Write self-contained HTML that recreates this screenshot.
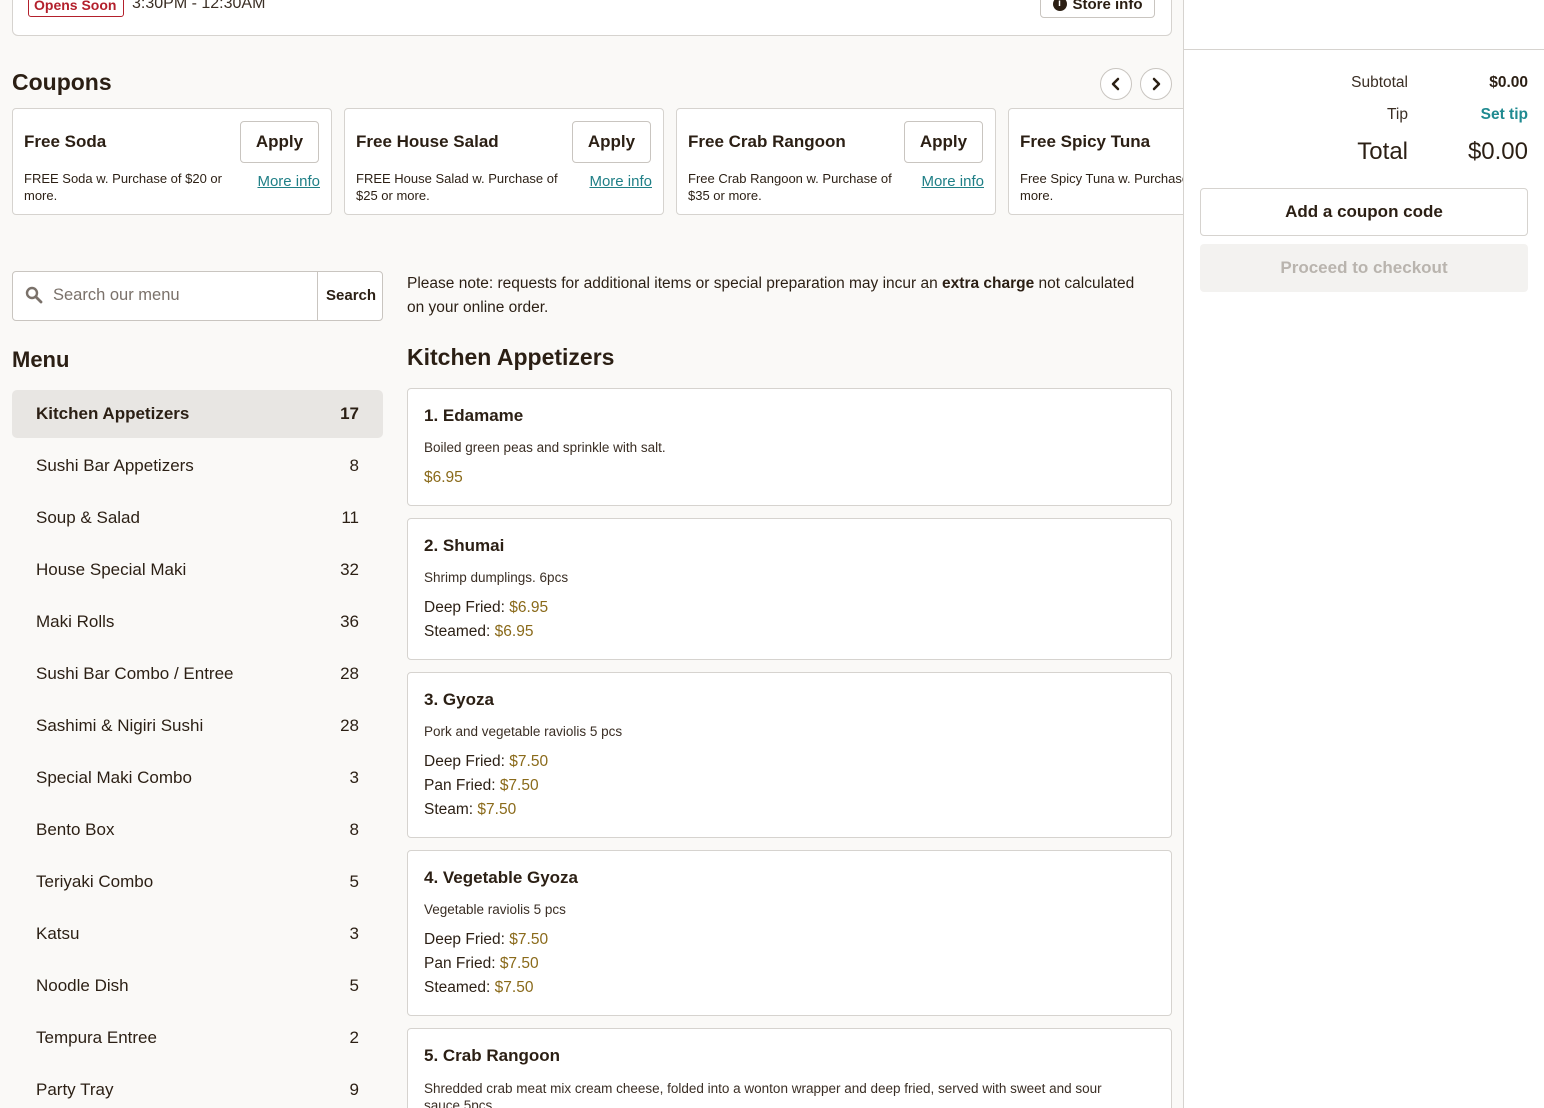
<!DOCTYPE html>
<html style="width:1544px;height:1108px;overflow:hidden"><head><meta charset="utf-8"><style>
*{box-sizing:border-box;margin:0;padding:0}
body{width:1544px;height:1108px;overflow:hidden;background:#faf9f7;font-family:"Liberation Sans",sans-serif;color:#2b1f14;position:relative}
.a{position:absolute}
.card{position:absolute;background:#fff;border:1px solid #d6d3cf;border-radius:4px}
.btn{position:absolute;background:#fff;border:1px solid #c9c5c0;border-radius:4px;display:flex;align-items:center;justify-content:center;font-weight:bold}
.cp .t{position:absolute;left:11px;top:23px;font-size:17px;font-weight:bold}
.cp .d{position:absolute;left:11px;top:61px;font-size:13px;line-height:17px;width:210px}
.cp .m{position:absolute;right:11px;top:64px;font-size:15px;color:#1f7f86;text-decoration:underline}
.cp .btn{right:12px;top:12px;width:79px;height:42px;font-size:17px}
.cat{position:absolute;left:12px;width:371px;height:48px;border-radius:5px;font-size:17px;display:flex;align-items:center;justify-content:space-between;padding:0 24px}
.it .t{position:absolute;left:16px;top:17px;font-size:17px;font-weight:bold}
.it .d{position:absolute;left:16px;top:51px;font-size:13.5px;color:#3a2e24}
.it .p{position:absolute;left:16px;font-size:15.5px}
.pr{color:#8a6a1a}
</style></head><body>
<div class="card" style="left:12px;top:-40px;width:1160px;height:76px;border-radius:6px"></div>
<div class="a" style="left:28px;top:-8px;width:96px;height:25px;border:1px solid #b3202c;border-radius:3px;color:#b3202c;font-size:14px;font-weight:bold;padding:4px 0 0 5px">Opens Soon</div>
<div class="a" style="left:132px;top:-5px;font-size:16px;color:#3a2e24">3:30PM - 12:30AM</div>
<div class="btn" style="left:1040px;top:-12px;width:115px;height:30px;font-size:15px;padding-top:2px"><span style="display:inline-block;width:14px;height:14px;border-radius:50%;background:#2b1f14;color:#fff;font-size:10px;text-align:center;line-height:14px;margin-right:6px">i</span>Store info</div>

<div class="a" style="left:12px;top:69px;font-size:23px;font-weight:bold">Coupons</div>
<div class="a" style="left:1100px;top:68px;width:32px;height:32px;border:1px solid #c9c5c0;border-radius:50%;background:#fff"><svg width="30" height="30" viewBox="0 0 30 30"><path d="M17 10l-5 5 5 5" fill="none" stroke="#2b1f14" stroke-width="2.5" stroke-linecap="round" stroke-linejoin="round"/></svg></div>
<div class="a" style="left:1140px;top:68px;width:32px;height:32px;border:1px solid #c9c5c0;border-radius:50%;background:#fff"><svg width="30" height="30" viewBox="0 0 30 30"><path d="M13 10l5 5-5 5" fill="none" stroke="#2b1f14" stroke-width="2.5" stroke-linecap="round" stroke-linejoin="round"/></svg></div>

<div class="a" style="left:0;top:100px;width:1183px;height:120px;overflow:hidden">
<div class="card cp" style="left:12px;top:8px;width:320px;height:107px"><div class="t">Free Soda</div><div class="btn">Apply</div><div class="d">FREE Soda w. Purchase of $20 or more.</div><div class="m">More info</div></div>
<div class="card cp" style="left:344px;top:8px;width:320px;height:107px"><div class="t">Free House Salad</div><div class="btn">Apply</div><div class="d">FREE House Salad w. Purchase of $25 or more.</div><div class="m">More info</div></div>
<div class="card cp" style="left:676px;top:8px;width:320px;height:107px"><div class="t">Free Crab Rangoon</div><div class="btn">Apply</div><div class="d">Free Crab Rangoon w. Purchase of $35 or more.</div><div class="m">More info</div></div>
<div class="card cp" style="left:1008px;top:8px;width:320px;height:107px"><div class="t">Free Spicy Tuna</div><div class="d" style="width:190px">Free Spicy Tuna w. Purchase or more.</div></div>
</div>

<div class="card" style="left:12px;top:271px;width:371px;height:50px;border-color:#c9c5c0"></div>
<svg class="a" style="left:25px;top:286px" width="18" height="18" viewBox="0 0 18 18"><circle cx="7" cy="7" r="5" fill="none" stroke="#7a716a" stroke-width="2.4"/><path d="M11 11l5 5" stroke="#7a716a" stroke-width="2.8" stroke-linecap="round"/></svg>
<div class="a" style="left:53px;top:286px;font-size:16.5px;color:#7a716a">Search our menu</div>
<div class="a" style="left:317px;top:272px;width:1px;height:48px;background:#c9c5c0"></div>
<div class="a" style="left:326px;top:287px;font-size:15px;font-weight:bold">Search</div>

<div class="a" style="left:12px;top:347px;font-size:22px;font-weight:bold">Menu</div>
<div class="cat" style="top:390px;background:#e8e6e3;font-weight:bold"><span>Kitchen Appetizers</span><span>17</span></div>
<div class="cat" style="top:442px"><span>Sushi Bar Appetizers</span><span>8</span></div>
<div class="cat" style="top:494px"><span>Soup &amp; Salad</span><span>11</span></div>
<div class="cat" style="top:546px"><span>House Special Maki</span><span>32</span></div>
<div class="cat" style="top:598px"><span>Maki Rolls</span><span>36</span></div>
<div class="cat" style="top:650px"><span>Sushi Bar Combo / Entree</span><span>28</span></div>
<div class="cat" style="top:702px"><span>Sashimi &amp; Nigiri Sushi</span><span>28</span></div>
<div class="cat" style="top:754px"><span>Special Maki Combo</span><span>3</span></div>
<div class="cat" style="top:806px"><span>Bento Box</span><span>8</span></div>
<div class="cat" style="top:858px"><span>Teriyaki Combo</span><span>5</span></div>
<div class="cat" style="top:910px"><span>Katsu</span><span>3</span></div>
<div class="cat" style="top:962px"><span>Noodle Dish</span><span>5</span></div>
<div class="cat" style="top:1014px"><span>Tempura Entree</span><span>2</span></div>
<div class="cat" style="top:1066px"><span>Party Tray</span><span>9</span></div>

<div class="a" style="left:407px;top:272px;width:740px;font-size:15.5px;line-height:24px">Please note: requests for additional items or special preparation may incur an <b>extra charge</b> not calculated on your online order.</div>
<div class="a" style="left:407px;top:344px;font-size:23px;font-weight:bold">Kitchen Appetizers</div>

<div class="card it" style="left:407px;top:388px;width:765px;height:118px"><div class="t">1. Edamame</div><div class="d">Boiled green peas and sprinkle with salt.</div><div class="p pr" style="top:80px">$6.95</div></div>
<div class="card it" style="left:407px;top:518px;width:765px;height:142px"><div class="t">2. Shumai</div><div class="d">Shrimp dumplings. 6pcs</div><div class="p" style="top:80px">Deep Fried: <span class="pr">$6.95</span></div><div class="p" style="top:104px">Steamed: <span class="pr">$6.95</span></div></div>
<div class="card it" style="left:407px;top:672px;width:765px;height:166px"><div class="t">3. Gyoza</div><div class="d">Pork and vegetable raviolis 5 pcs</div><div class="p" style="top:80px">Deep Fried: <span class="pr">$7.50</span></div><div class="p" style="top:104px">Pan Fried: <span class="pr">$7.50</span></div><div class="p" style="top:128px">Steam: <span class="pr">$7.50</span></div></div>
<div class="card it" style="left:407px;top:850px;width:765px;height:166px"><div class="t">4. Vegetable Gyoza</div><div class="d">Vegetable raviolis 5 pcs</div><div class="p" style="top:80px">Deep Fried: <span class="pr">$7.50</span></div><div class="p" style="top:104px">Pan Fried: <span class="pr">$7.50</span></div><div class="p" style="top:128px">Steamed: <span class="pr">$7.50</span></div></div>
<div class="card it" style="left:407px;top:1028px;width:765px;height:100px"><div class="t">5. Crab Rangoon</div><div class="d" style="width:710px;line-height:17px">Shredded crab meat mix cream cheese, folded into a wonton wrapper and deep fried, served with sweet and sour sauce 5pcs</div></div>

<div class="a" style="left:1183px;top:0;width:361px;height:1108px;background:#fff;border-left:1px solid #d6d3cf"></div>
<div class="a" style="left:1184px;top:49px;width:360px;height:1px;background:#d6d3cf"></div>
<div class="a" style="right:136px;top:74px;font-size:15.5px;color:#3a2e24">Subtotal</div>
<div class="a" style="right:16px;top:74px;font-size:15.5px;font-weight:bold">$0.00</div>
<div class="a" style="right:136px;top:106px;font-size:15.5px;color:#3a2e24">Tip</div>
<div class="a" style="right:16px;top:106px;font-size:15.5px;font-weight:bold;color:#1f8a90">Set tip</div>
<div class="a" style="right:136px;top:138px;font-size:24px">Total</div>
<div class="a" style="right:16px;top:138px;font-size:24px">$0.00</div>
<div class="btn" style="left:1200px;top:188px;width:328px;height:48px;font-size:17px;border-color:#d6d3cf">Add a coupon code</div>
<div class="a" style="left:1200px;top:244px;width:328px;height:48px;border-radius:4px;background:#f3f2f0;color:#b9b4ae;font-size:17px;font-weight:bold;display:flex;align-items:center;justify-content:center">Proceed to checkout</div>
</body></html>
